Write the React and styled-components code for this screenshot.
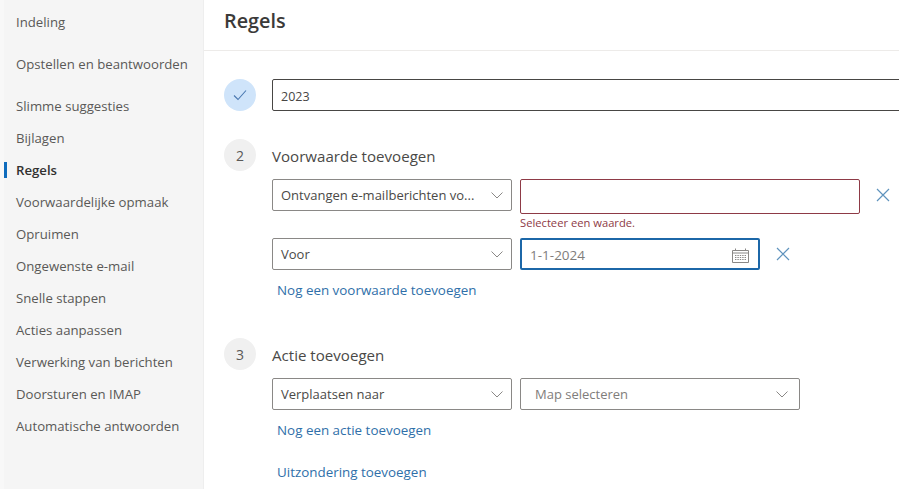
import React from 'react';
import styled, { createGlobalStyle } from 'styled-components';

const Global = createGlobalStyle`
  html, body { margin: 0; padding: 0; height: 100%; overflow: hidden; background: #fff; }
  body { font-family: "Open Sans", "Noto Sans", "Liberation Sans", sans-serif; color: #323130; }
  #root { height: 100%; }
`;

const Page = styled.div`
  display: flex;
  width: 899px;
  height: 489px;
  overflow: hidden;
`;

const Sidebar = styled.nav`
  width: 200px;
  flex: none;
  margin-left: 4px;
  margin-right: -1px;
  background: #f5f5f5;
  box-shadow: -4px 0 0 #f8f8f8;
  padding-top: 6px;
  box-sizing: border-box;
`;

const NavItem = styled.div`
  position: relative;
  height: 32px;
  line-height: 32px;
  padding-left: 12px;
  margin-bottom: ${p => (p.$gap ? '10px' : '0')};
  font-size: 13.2px;
  white-space: nowrap;
  color: ${p => (p.$active ? '#323130' : '#5a5957')};
  font-weight: ${p => (p.$active ? 600 : 400)};
  &::before {
    content: ${p => (p.$active ? '""' : 'none')};
    position: absolute;
    left: 0;
    top: 8px;
    width: 3px;
    height: 16px;
    background: #0f6cbd;
  }
`;

const Main = styled.main`
  flex: 1;
  min-width: 0;
  overflow: hidden;
  border-left: 1px solid #eeeeee;
`;

const Header = styled.header`
  height: 51px;
  box-sizing: border-box;
  border-bottom: 1px solid #edebe9;
  padding-left: 20px;
  line-height: 42px;
  font-size: 19.8px;
  font-weight: 600;
  color: #3b3a39;
`;

const Form = styled.div`
  padding: 28px 0 0 20px;
`;

const Step = styled.section`
  display: flex;
  gap: 16px;
  margin-bottom: ${p => p.$mb || 0}px;
`;

const Circle = styled.div`
  width: 32px;
  height: 32px;
  flex: none;
  border-radius: 50%;
  display: flex;
  align-items: center;
  justify-content: center;
  font-size: 14px;
  color: #5a5957;
  background: ${p => (p.$done ? '#cfe4fa' : '#f0f0f0')};
`;

const StepBody = styled.div`
  flex: 1;
  min-width: 0;
`;

const StepTitle = styled.div`
  height: 40px;
  line-height: 35px;
  font-size: 15.1px;
  color: #4a4947;
`;

const NameInput = styled.div`
  width: 700px;
  height: 32px;
  box-sizing: border-box;
  border: 1px solid #484644;
  border-radius: 2px;
  padding-left: 8px;
  line-height: 33px;
  font-size: 12.5px;
  color: #484644;
`;

const Row = styled.div`
  display: flex;
  gap: 8px;
  align-items: flex-start;
`;

const Select = styled.div`
  width: ${p => p.$w}px;
  height: 32px;
  flex: none;
  box-sizing: border-box;
  border: 1px solid #8a8886;
  border-radius: 2px;
  display: flex;
  align-items: center;
  justify-content: space-between;
  padding-right: ${p => (p.$placeholder ? '11px' : '8px')};
  padding-left: ${p => (p.$placeholder ? '14px' : '8px')};
  font-size: 13px;
  white-space: nowrap;
  color: ${p => (p.$placeholder ? '#7f7d7b' : '#4a4947')};
`;

const ErrorField = styled.div`
  width: 340px;
`;

const ErrorInput = styled.div`
  height: 35px;
  box-sizing: border-box;
  border: 1px solid #8e3a46;
  border-radius: 2px;
`;

const ErrorText = styled.div`
  height: 24px;
  line-height: 18px;
  font-size: 11.2px;
  color: #8e3a46;
`;

const DateInput = styled.div`
  width: 240px;
  height: 32px;
  flex: none;
  box-sizing: border-box;
  border: 2px solid #1c67a8;
  border-radius: 2px;
  display: flex;
  align-items: center;
  justify-content: space-between;
  padding: 2px 9px 0 8px;
  font-size: 13.5px;
  color: #7f7d7b;
`;

const Close = styled.button`
  border: 0;
  background: none;
  padding: 0;
  margin-left: 8px;
  margin-top: 9px;
  width: 14px;
  height: 14px;
  display: flex;
  color: #5f93bd;
`;

const LinkText = styled.a`
  display: block;
  margin-left: 5px;
  font-size: 13.4px;
  line-height: 17px;
  color: #2f6fa9;
  white-space: nowrap;
  margin-top: ${p => p.$mt || 0}px;
`;

const Chevron = () => (
  <svg width="12" height="7" viewBox="0 0 12 7" fill="none" stroke="#8a8886" strokeWidth="1">
    <path d="M.5 .5L6 6l5.500-5.500" />
  </svg>
);

const CloseIcon = () => (
  <svg width="14" height="14" viewBox="0 0 14 14" fill="none" stroke="currentColor" strokeWidth="1.2">
    <path d="M1 1l12 12M13 1L1 13" />
  </svg>
);

const Calendar = () => (
  <svg width="17" height="15" viewBox="0 0 17 15" fill="none" stroke="#8a8886" strokeWidth="1">
    <path d="M.5 2.500h16v12H.5zM.5 5h16" />
    <path d="M3.500 .5v2M13.500 .5v2" />
    <path d="M3 7.500h11M3 9.500h11M3 11.500h11" strokeDasharray="1.4 1" />
  </svg>
);

const nav = [
  ['Indeling', true],
  ['Opstellen en beantwoorden', true],
  ['Slimme suggesties'],
  ['Bijlagen'],
  ['Regels', false, true],
  ['Voorwaardelijke opmaak'],
  ['Opruimen'],
  ['Ongewenste e-mail'],
  ['Snelle stappen'],
  ['Acties aanpassen'],
  ['Verwerking van berichten'],
  ['Doorsturen en IMAP'],
  ['Automatische antwoorden'],
];

export default function App() {
  return (
    <Page>
      <Global />
      <Sidebar>
        {nav.map(([label, gap, active]) => (
          <NavItem key={label} $gap={gap} $active={active}>{label}</NavItem>
        ))}
      </Sidebar>
      <Main>
        <Header>Regels</Header>
        <Form>
          <Step $mb={28}>
            <Circle $done>
              <svg width="14" height="12" viewBox="0 0 14 12" fill="none" stroke="#4a78b0" strokeWidth="1.1">
                <path d="M1 6.500l4 4 8-9" />
              </svg>
            </Circle>
            <StepBody>
              <NameInput>2023</NameInput>
            </StepBody>
          </Step>
          <Step $mb={39}>
            <Circle>2</Circle>
            <StepBody>
              <StepTitle>Voorwaarde toevoegen</StepTitle>
              <Row>
                <Select $w={240}>Ontvangen e-mailberichten vo...<Chevron /></Select>
                <ErrorField>
                  <ErrorInput />
                  <ErrorText>Selecteer een waarde.</ErrorText>
                </ErrorField>
                <Close><CloseIcon /></Close>
              </Row>
              <Row>
                <Select $w={240}>Voor<Chevron /></Select>
                <DateInput>1-1-2024<Calendar /></DateInput>
                <Close><CloseIcon /></Close>
              </Row>
              <LinkText $mt={12}>Nog een voorwaarde toevoegen</LinkText>
            </StepBody>
          </Step>
          <Step>
            <Circle>3</Circle>
            <StepBody>
              <StepTitle>Actie toevoegen</StepTitle>
              <Row>
                <Select $w={240}>Verplaatsen naar<Chevron /></Select>
                <Select $w={280} $placeholder>Map selecteren<Chevron /></Select>
              </Row>
              <LinkText $mt={12}>Nog een actie toevoegen</LinkText>
              <LinkText $mt={25}>Uitzondering toevoegen</LinkText>
            </StepBody>
          </Step>
        </Form>
      </Main>
    </Page>
  );
}
